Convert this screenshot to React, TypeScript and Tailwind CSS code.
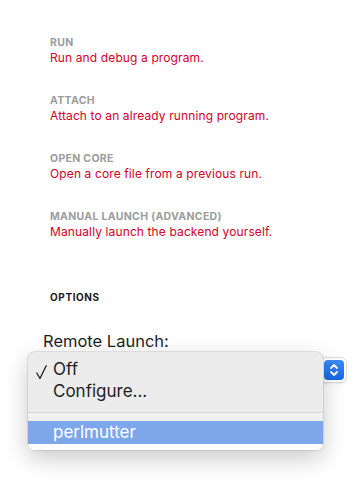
const MODES = [
  { title: "Run", description: "Run and debug a program." },
  { title: "Attach", description: "Attach to an already running program." },
  { title: "Open Core", description: "Open a core file from a previous run." },
  { title: "Manual Launch (Advanced)", description: "Manually launch the backend yourself." },
];

function Stepper() {
  return (
    <div className="w-[20px] h-[20px] rounded-[4px] bg-gradient-to-b from-[#3d8bf7] to-[#1766e6] flex items-center justify-center">
      <svg width="10" height="14" viewBox="0 0 10 14" fill="none" stroke="white" strokeWidth="1.8" strokeLinecap="round" strokeLinejoin="round">
        <polyline points="2,5 5,2 8,5" />
        <polyline points="2,9 5,12 8,9" />
      </svg>
    </div>
  );
}

export default function App() {
  return (
    <div className="w-[358px] h-[482px] bg-white overflow-hidden" style={{ fontFamily: "Inter, 'Liberation Sans', sans-serif" }}>
      <div className="pl-[50px] pt-[37px] flex flex-col gap-[30px]">
        {MODES.map((mode, i) => (
          <div key={i} className="flex flex-col gap-[1px]">
            <div className="text-[10.5px] leading-[12px] font-bold uppercase tracking-[0.03em] text-[#9c9c9c]">{mode.title}</div>
            <div className="text-[12px] leading-[15px] tracking-[0.01em] text-[#d4002a]">{mode.description}</div>
          </div>
        ))}
      </div>

      <div className="pl-[50px] mt-[52px] text-[10px] leading-[12px] font-bold uppercase tracking-[0.06em] text-[#1a1a1a]">Options</div>

      <div className="pl-[43px] mt-[28px] text-[16.5px] leading-[20px] text-[#1f1f1f]">Remote Launch:</div>

      <div className="relative mt-[6px] h-[26px]">
        {/* popup button, mostly hidden under the open menu */}
        <div className="absolute left-[200px] right-[11px] top-0 h-[26px] rounded-[6px] bg-white border border-[#dcdcdc] shadow-[0_1px_2px_rgba(0,0,0,0.08)] flex items-center justify-end pr-[2px]">
          <Stepper />
        </div>

        {/* open menu */}
        <div className="absolute left-[28px] top-[-5px] w-[295px] rounded-[6px] overflow-hidden bg-[#ececec] shadow-[0_8px_24px_rgba(0,0,0,0.22),0_0_0_0.5px_rgba(0,0,0,0.18)] text-[17px] text-[#1f1f1f]">
          <div className="pt-[6px]">
            <div className="h-[22px] leading-[22px] flex items-center">
              <span className="w-[25px] flex justify-center pl-[1px]">
                <svg width="11" height="15" viewBox="0 0 11 15" fill="none" stroke="#1f1f1f" strokeWidth="1.3" strokeLinecap="round" strokeLinejoin="round" className="mt-[6px]">
                  <polyline points="0.8,8 4,13.5 10.2,0.8" />
                </svg>
              </span>
              <span>Off</span>
            </div>
            <div className="h-[22px] leading-[22px] pl-[25px]">Configure...</div>
          </div>
          <div className="h-[10px]" />
          <div className="h-px bg-[#d3d3d3]" />
          <div className="h-[8px] bg-[#f0f0f0]" />
          <div className="h-[23px] leading-[23px] pl-[25px] bg-[#7ea6ea] text-white">perlmutter</div>
          <div className="h-[6px] bg-white" />
        </div>
      </div>
    </div>
  );
}
